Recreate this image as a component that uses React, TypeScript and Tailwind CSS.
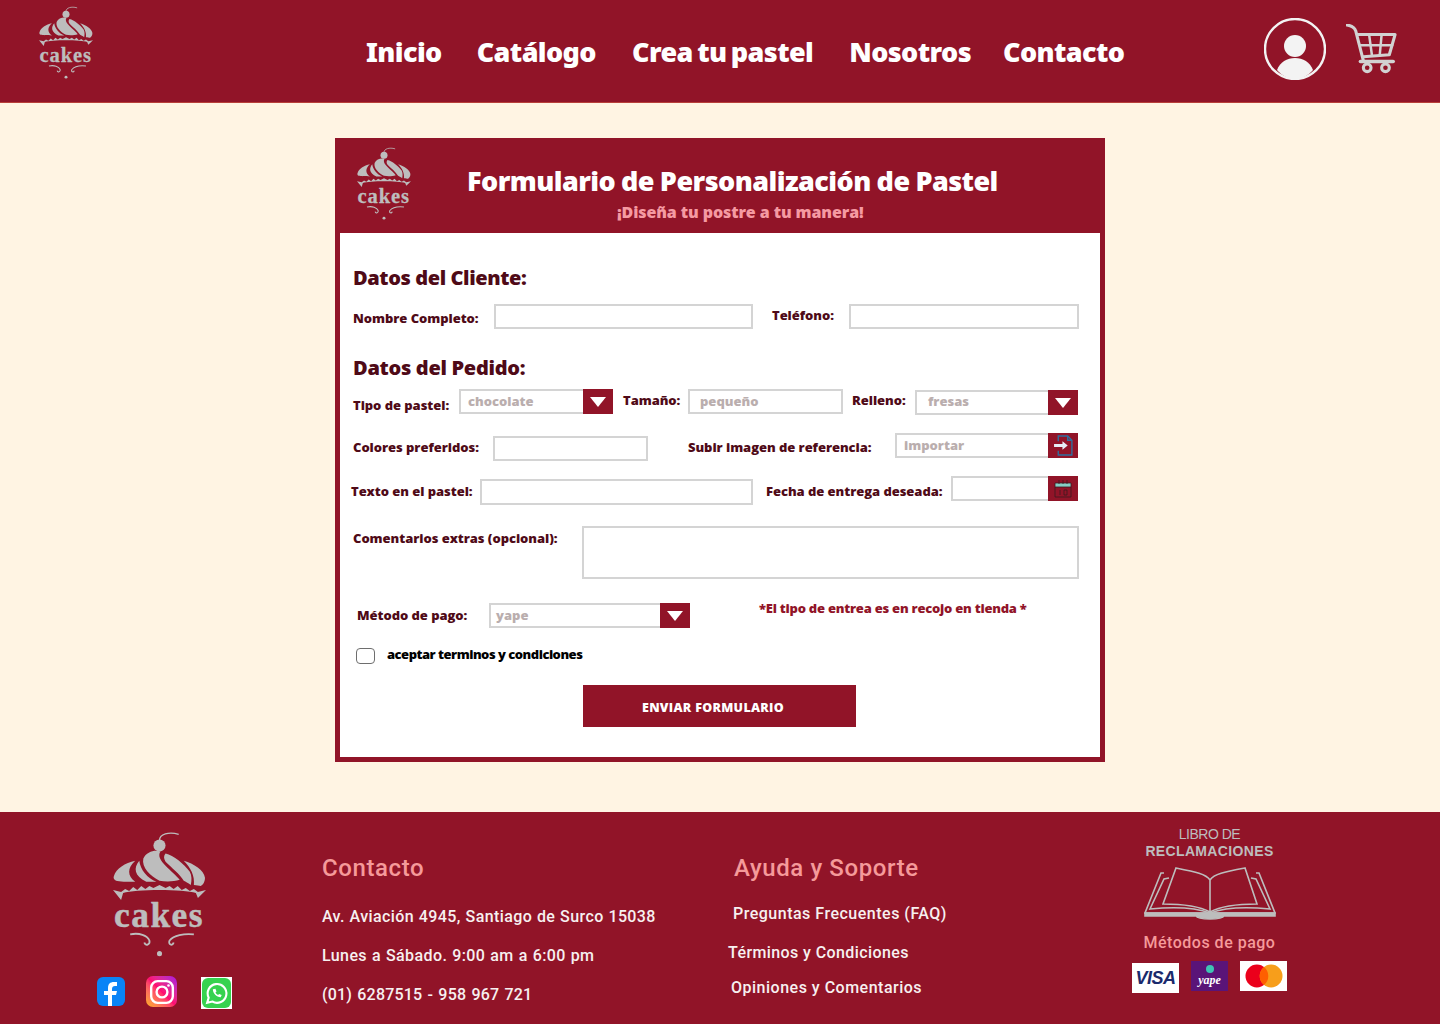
import type { ReactNode } from 'react';

const nav = [
  { label: 'Inicio', cls: 'ml-[0px]' },
  { label: 'Catálogo', cls: 'ml-[35px]' },
  { label: 'Crea tu pastel', cls: 'ml-[36px]' },
  { label: 'Nosotros', cls: 'ml-[36px]' },
  { label: 'Contacto', cls: 'ml-[32px]' },
];

const heavy = "font-['Noto_Sans',sans-serif] font-black";
const small = "font-['Open_Sans',sans-serif] font-extrabold";

function CakeLogo({ className }: { className: string }) {
  return (
    <svg viewBox="0 0 92 124" className={`overflow-visible ${className}`} fill="#bdbdbd">
      <path d="M46 9C46 3 55 0 65 3" fill="none" stroke="#bdbdbd" strokeWidth="1.300" />
      <circle cx="46" cy="14" r="6" />
      <path d="M1 44C3 37 12 31 22 29C14 36 14 44 22 50C14 50 6 50 3 49C1 48 0 46 1 44z" />
      <path d="M26 29C20 36 21 44 33 50L43 50C34 46 27 38 26 29z" />
      <path d="M30 27C33 20 42 18 47 20C44 24 47 29 52 34C57 39 63 44 66 48C60 50 52 50 46 49C37 44 28 36 30 27z" />
      <path d="M52 22C60 24 70 32 76 40C78 44 78 48 77 53C74 51 72 50 70 49C66 42 58 36 52 30C50 27 50 24 52 22z" />
      <path d="M70 29C80 32 90 38 91 46C91 50 89 53 87 54C85 54 83 53 80 53C81 44 77 36 70 29z" />
      <path d="M0 58L8 60L12 57L16 59L20 55L24 58L28 54L32 57L36 54L40 56L46 53L52 56L56 54L60 57L64 54L68 58L72 56L76 59L80 57L84 60L92 58L84 66L82 61C70 57 22 57 10 61L8 68z" />
      <text x="1" y="95" fontFamily="'Liberation Serif',serif" fontWeight="700" fontSize="35" letterSpacing="1.500" stroke="#bdbdbd" strokeWidth="0.500">
        cakes
      </text>
      <path d="M17 102C26 100 34 103 36 108C37 112 32 114 31 110M80 102C70 101 60 103 56 108C54 112 59 114 60 110" fill="none" stroke="#bdbdbd" strokeWidth="1.800" />
      <circle cx="46" cy="121" r="2.500" />
    </svg>
  );
}

function Caret() {
  return (
    <span className="flex h-[25px] w-[30px] shrink-0 items-center justify-center bg-[#911428]">
      <span className="h-0 w-0 border-x-[8px] border-t-[10px] border-x-transparent border-t-white" />
    </span>
  );
}

function Label({ children, className = '' }: { children: string; className?: string }) {
  return (
    <span className={`${small} shrink-0 whitespace-nowrap text-[13px] leading-[18px] tracking-[-0.05px] text-[#4f0a17] ${className}`}>
      {children}
    </span>
  );
}

function Box({ value, className = '', textClass = 'pl-[8px]', children }: { value?: string; className?: string; textClass?: string; children?: ReactNode }) {
  return (
    <div className={`flex h-[25px] shrink-0 bg-white ${className}`}>
      <div className={`flex min-w-0 flex-1 items-center border-2 border-[#d4d4d4] ${children ? 'border-r-0' : ''}`}>
        <span className={`${small} text-[13px] text-[#baaeae] ${textClass}`}>{value}</span>
      </div>
      {children}
    </div>
  );
}

export default function App() {
  return (
    <div className="flex min-h-[1024px] w-full flex-col bg-[#fff4e3]">
      {/* Header */}
      <header className="flex h-[103px] items-start border-b border-[#b8403a] bg-[#911428]">
        <CakeLogo className="ml-[39px] mt-[6px] h-[73px] w-[54px] shrink-0" />
        <nav className={`ml-[273px] mt-[33px] flex text-[27px] leading-[38px] tracking-[-0.6px] [word-spacing:-2px] text-white ${heavy}`}>
          {nav.map((item) => (
            <a key={item.label} className={`whitespace-nowrap ${item.cls}`}>
              {item.label}
            </a>
          ))}
        </nav>
        <div className="ml-auto mr-[42px] mt-[18px] flex items-start">
          <svg viewBox="0 0 62 62" className="h-[62px] w-[62px]">
            <circle cx="31" cy="31" r="30" fill="none" stroke="#f3f3f3" strokeWidth="2.400" />
            <circle cx="31" cy="28" r="11" fill="#f3f3f3" />
            <path d="M13 52c3-8 10-12 18-12s15 4 18 12c-4 5-11 9-18 9s-14-4-18-9z" fill="#f3f3f3" />
          </svg>
          <svg viewBox="0 0 54 52" className="ml-[20px] mt-[6px] h-[50px] w-[52px]" fill="none" stroke="#d2d2d2" strokeWidth="3.200" strokeLinecap="round" strokeLinejoin="round">
            <path d="M1 1c6 1 8 3 9 6l8 31" />
            <path d="M12 11h39l-6 21-27 2" />
            <path d="M24 11l3 22M37 11l-2 22M15 22h33" strokeWidth="2.600" />
            <path d="M15 39h34" strokeWidth="3.800" />
            <circle cx="22" cy="45.500" r="4" />
            <circle cx="41" cy="45.500" r="4" />
          </svg>
        </div>
      </header>

      {/* Form */}
      <main className="flex h-[709px] justify-center pt-[35px]">
        <div className="flex h-[624px] w-[770px] flex-col bg-[#911428] px-[5px] pb-[5px]">
          <div className="flex h-[95px] shrink-0 items-start">
            <CakeLogo className="ml-[17px] mt-[9px] h-[73px] w-[54px] shrink-0" />
            <div className="ml-[8px] flex w-[600px] flex-col">
              <h1 className={`${heavy} ml-[48px] mt-[24px] whitespace-nowrap text-[27px] leading-[38px] tracking-[-0.55px] [word-spacing:-0.6px] text-white`}>
                Formulario de Personalización de Pastel
              </h1>
              <p className={`${small} ml-[198px] mt-[1px] whitespace-nowrap text-[16px] leading-[22px] tracking-[-0.1px] text-[#f59aa2]`}>
                ¡Diseña tu postre a tu manera!
              </p>
            </div>
          </div>

          <div className="flex-1 bg-white pl-[13px]">
            <h2 className={`${heavy} mt-[31px] text-[20px] leading-[28px] tracking-[-0.4px] text-[#4f0a17]`}>Datos del Cliente:</h2>

            <div className="mt-[12px] flex h-[25px] items-start">
              <Label className="mt-[5px] w-[141px]">Nombre Completo:</Label>
              <Box className="w-[259px]" />
              <Label className="ml-[19px] mt-[2px] w-[77px]">Teléfono:</Label>
              <Box className="w-[230px]" />
            </div>

            <h2 className={`${heavy} mt-[25px] text-[20px] leading-[28px] tracking-[-0.3px] text-[#4f0a17]`}>Datos del Pedido:</h2>

            <div className="mt-[7px] flex h-[26px] items-start">
              <Label className="mt-[7px] w-[106px]">Tipo de pastel:</Label>
              <Box value="chocolate" className="w-[154px]" textClass="pl-[7px]">
                <Caret />
              </Box>
              <Label className="ml-[10px] mt-[2px] w-[65px]">Tamaño:</Label>
              <Box value="pequeño" className="w-[155px]" textClass="pl-[10px]" />
              <Label className="ml-[9px] mt-[2px] w-[63px]">Relleno:</Label>
              <Box value="fresas" className="mt-[1px] w-[163px]" textClass="pb-[2px] pl-[11px]">
                <Caret />
              </Box>
            </div>

            <div className="mt-[18px] flex h-[28px] items-start">
              <Label className="mt-[5px] w-[140px]">Colores preferidos:</Label>
              <Box className="mt-[3px] w-[155px]" />
              <Label className="ml-[40px] mt-[5px] w-[207px]">Subir imagen de referencia:</Label>
              <Box value="importar" className="w-[183px]" textClass="pl-[7px]">
                <span className="flex h-[25px] w-[30px] items-center justify-center bg-[#911428]">
                  <svg viewBox="0 0 20 20" className="h-[21px] w-[21px]" fill="none" stroke="#2f6f9f" strokeWidth="1.300">
                    <path d="M5 6V1h9l4 4v14H5v-4" />
                    <path d="M14 1v4h4" />
                    <path d="M1 8.500h8V6l5 4-5 4v-2.500H1z" fill="#e6eef5" stroke="none" />
                  </svg>
                </span>
              </Box>
            </div>

            <div className="mt-[15px] flex h-[29px] items-start">
              <Label className="ml-[-2px] mt-[6px] w-[129px]">Texto en el pastel:</Label>
              <Box className="mt-[3px] h-[26px] w-[273px]" />
              <Label className="ml-[13px] mt-[6px] w-[185px]">Fecha de entrega deseada:</Label>
              <Box className="w-[127px]">
                <span className="flex h-[25px] w-[30px] items-center justify-center bg-[#911428]">
                  <svg viewBox="0 0 18 18" className="h-[18px] w-[18px]" fill="none" stroke="#3a1a20" strokeWidth="0.800">
                    <path d="M1 7V3h16v4z" fill="#86d0c6" />
                    <path d="M1 7v10h16V7M5 0v4M9 0v4M13 0v4" />
                    <path d="M6 10v5M10 10h3v5h-3z" />
                  </svg>
                </span>
              </Box>
            </div>

            <div className="mt-[21px] flex h-[53px] items-start">
              <Label className="mt-[3px] w-[229px]">Comentarios extras (opcional):</Label>
              <div className="h-[53px] w-[497px] shrink-0 border-2 border-[#d4d4d4]" />
            </div>

            <div className="mt-[24px] flex h-[25px] items-start">
              <Label className="ml-[4px] mt-[3px] w-[132px]">Método de pago:</Label>
              <Box value="yape" className="w-[201px]" textClass="pl-[5px]">
                <Caret />
              </Box>
              <span className={`${small} ml-[69px] mt-[-4px] whitespace-nowrap text-[13px] leading-[18px] tracking-[-0.23px] text-[#911428]`}>
                *El tipo de entrea es en recojo en tienda *
              </span>
            </div>

            <div className="mt-[17px] flex items-start">
              <span className="ml-[3px] mt-[3px] h-[16px] w-[19px] shrink-0 rounded-[4px] border border-[#6e6e6e]" />
              <span className={`${small} ml-[12px] text-[13px] leading-[18px] tracking-[-0.5px] text-black`}>aceptar terminos y condiciones</span>
            </div>

            <button className={`${small} ml-[230px] mt-[21px] flex h-[42px] w-[273px] items-center justify-center bg-[#911428] pr-[13px] pt-[5px] text-[12.5px] tracking-[0.3px] text-white`}>
              ENVIAR FORMULARIO
            </button>
          </div>
        </div>
      </main>

      {/* Footer */}
      <footer className="flex h-[212px] items-start bg-[#911428] font-['Roboto',sans-serif]">
        <div className="ml-[97px] flex w-[135px] shrink-0 flex-col items-start">
          <CakeLogo className="ml-[16px] mt-[19px] h-[126px] w-[93px]" />
          <div className="mt-[19px] flex items-start">
            <span className="mt-[1px] flex h-[29px] w-[28px] items-end justify-center overflow-hidden rounded-[6px] bg-[#0a84f6]">
              <svg viewBox="0 0 14 24" className="h-[24px] w-[14px]" fill="white">
                <path d="M4 24V13H0V9h4V6c0-4 2-6 6-6h3v4h-2C9 4 8 5 8 7v2h5l-1 4H8v11z" />
              </svg>
            </span>
            <span className="ml-[21px] flex h-[31px] w-[31px] items-center justify-center rounded-[7px] bg-gradient-to-tr from-[#ffb000] via-[#ff0a70] to-[#a800e0]">
              <svg viewBox="0 0 24 24" className="h-[26px] w-[26px]" fill="none" stroke="white" strokeWidth="2.200">
                <rect x="2" y="2" width="20" height="20" rx="6" />
                <circle cx="12" cy="12" r="5" />
                <circle cx="18" cy="6" r="1.200" fill="white" stroke="none" />
              </svg>
            </span>
            <span className="ml-[24px] mt-[1px] flex h-[32px] w-[31px] items-center justify-center bg-white">
              <span className="flex h-[30px] w-[29px] items-center justify-center rounded-[6px] bg-[#36d24f]">
                <svg viewBox="0 0 24 24" className="h-[25px] w-[25px]" fill="none" stroke="white" strokeWidth="2">
                  <path d="M3 21l1.500-5A9 9 0 1 1 8 19.700z" />
                  <path d="M8.500 8c0 4 3.500 7.500 7.500 7.500l1-2-2.500-1-1 1c-1-.5-2-1.500-2.500-2.500l1-1-1-2.500z" fill="white" stroke="none" />
                </svg>
              </span>
            </span>
          </div>
        </div>

        <div className="ml-[90px] w-[411px] shrink-0 font-medium text-[#f7f0f0]">
          <h3 className="mt-[41px] text-[24px] font-medium leading-[30px] tracking-[0.6px] text-[#f59a9a]">Contacto</h3>
          <p className="mt-[22px] whitespace-nowrap text-[16px] leading-[24px] tracking-[0.4px] [word-spacing:0.4px]">Av. Aviación 4945, Santiago de Surco 15038</p>
          <p className="mt-[15px] whitespace-nowrap text-[16px] leading-[24px] tracking-[0.4px] [word-spacing:0.6px]">Lunes a Sábado. 9:00 am a 6:00 pm</p>
          <p className="mt-[15px] whitespace-nowrap text-[16px] leading-[24px] tracking-[0.2px] [word-spacing:1px]">(01) 6287515 - 958 967 721</p>
        </div>

        <div className="w-[400px] shrink-0 font-medium text-[#f7f0f0]">
          <h3 className="ml-[1px] mt-[41px] text-[24px] leading-[30px] tracking-[0.6px] text-[#f59a9a]">Ayuda y Soporte</h3>
          <p className="mt-[19px] whitespace-nowrap text-[16px] leading-[24px] tracking-[0.5px]">Preguntas Frecuentes (FAQ)</p>
          <p className="ml-[-5px] mt-[15px] whitespace-nowrap text-[16px] leading-[24px] tracking-[0.4px]">Términos y Condiciones</p>
          <p className="ml-[-2px] mt-[11px] whitespace-nowrap text-[16px] leading-[24px] tracking-[0.5px]">Opiniones y Comentarios</p>
        </div>

        <div className="ml-[-1px] flex w-[155px] shrink-0 flex-col items-center font-['Liberation_Sans',sans-serif]">
          <span className="mt-[14px] text-[14px] leading-[17px] tracking-[-0.5px] text-[#bdbdbd]">LIBRO DE</span>
          <span className="text-[14px] font-bold leading-[16px] tracking-[0.35px] text-[#bdbdbd]">RECLAMACIONES</span>
          <svg viewBox="0 0 132 54" className="mt-[7px] h-[54px] w-[132px]" fill="none" stroke="#bdbdbd" strokeWidth="1.600">
            <path d="M66 46V14C62 8 52 6 32 2L19 38c18 0 36 2 47 8 11-6 29-8 47-8L101 2C80 6 70 8 66 14" />
            <path d="M25 12l-5 1L6 43c20-2 44-2 60 4 16-6 40-6 60-4L112 13l-5-1" />
            <path d="M20 7h-3L1 47h130L115 7h-3" />
            <path d="M1 47h130v3H80c-2 4-26 4-28 0H1z" fill="#bdbdbd" />
          </svg>
          <span className="mt-[13px] font-['Roboto',sans-serif] text-[16px] font-medium leading-[20px] tracking-[0.5px] text-[#f59a9a]">Métodos de pago</span>
          <div className="mt-[8px] flex w-[155px] items-start justify-between">
            <span className="mt-[2px] flex h-[30px] w-[47px] items-center justify-center bg-white text-[18px] font-bold italic tracking-[-0.5px] text-[#1a2a6c]">
              VISA
            </span>
            <span className="flex h-[30px] w-[37px] flex-col items-center justify-center bg-[#5a1478]">
              <span className="h-[8px] w-[8px] rounded-full bg-[#3fc4b4]" />
              <span className="font-['Liberation_Serif',serif] text-[12px] font-bold italic leading-[14px] text-white">yape</span>
            </span>
            <span className="flex h-[30px] w-[47px] items-center justify-center bg-white">
              <svg viewBox="0 0 40 24" className="h-[24px] w-[38px]">
                <circle cx="12.500" cy="12" r="12" fill="#eb001b" />
                <circle cx="27.500" cy="12" r="12" fill="#f79e1b" />
                <path d="M20 2.600a12 12 0 0 1 0 18.800a12 12 0 0 1 0-18.800z" fill="#ff5f00" />
              </svg>
            </span>
          </div>
        </div>
      </footer>
    </div>
  );
}
